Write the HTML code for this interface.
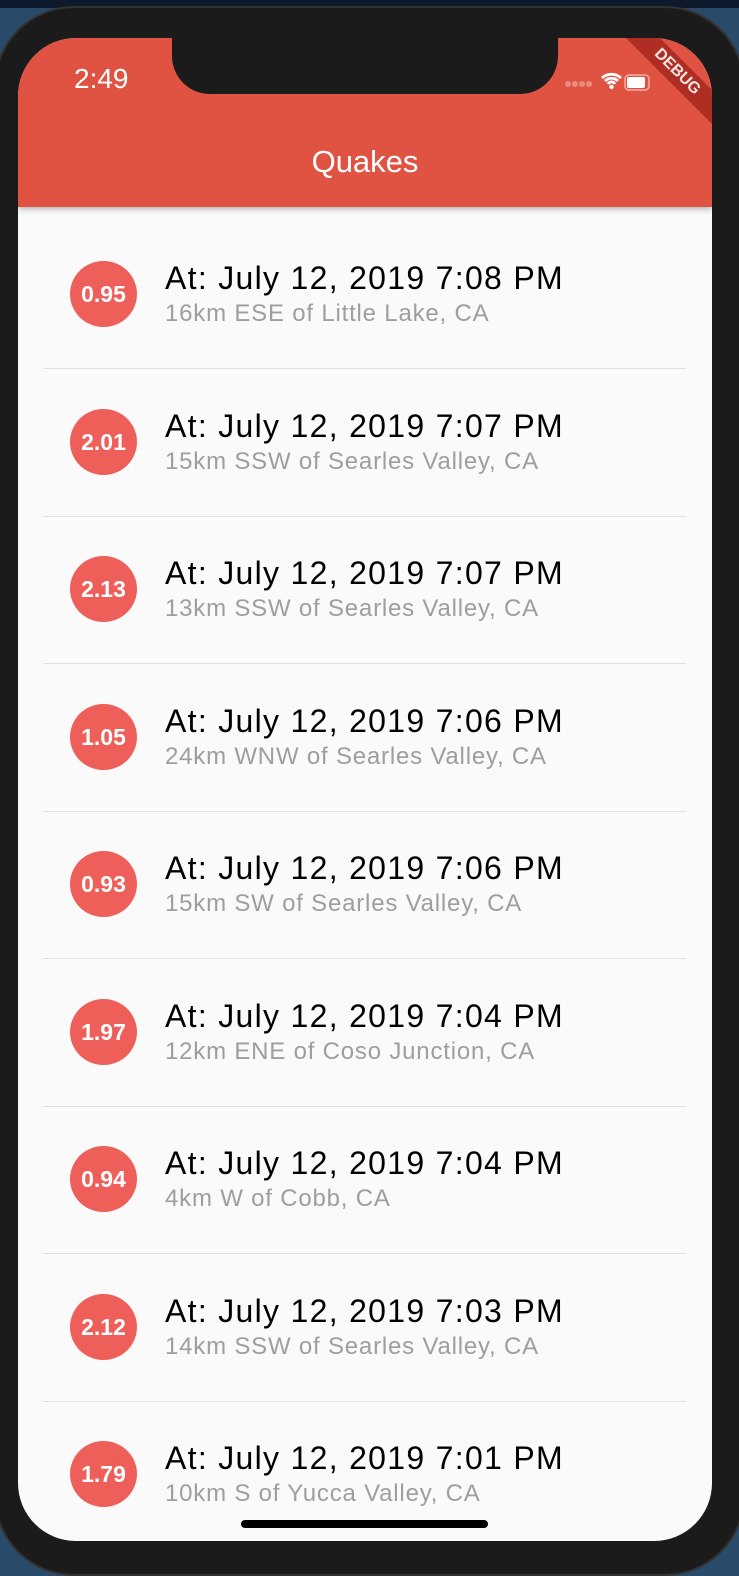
<!DOCTYPE html>
<html><head><meta charset="utf-8"><style>
*{margin:0;padding:0;box-sizing:border-box}
body{width:739px;height:1564px;overflow:hidden;background:#2a4a6a;font-family:"Liberation Sans",sans-serif;position:relative}
.topbar{position:absolute;left:0;top:0;width:739px;height:8px;background:#0c1a2c}
.phone{position:absolute;left:-6px;top:6px;width:751px;height:1570px;background:#1b1b1b;border-radius:80px;border:2px solid #333}
.screen{position:absolute;left:18px;top:38px;width:694px;height:1503px;background:#fafafa;border-radius:58px;overflow:hidden}
.appbar{position:absolute;left:0;top:0;width:694px;height:169px;background:#e05343;box-shadow:0 2px 6px rgba(0,0,0,.3)}
.notch{position:absolute;left:154px;top:0;width:386px;height:56px;background:#1b1b1b;border-radius:0 0 38px 38px}
.time{position:absolute;left:56px;top:25px;color:#fff;font-size:28px}
.title{position:absolute;left:0;width:694px;top:106px;text-align:center;color:#fff;font-size:31px}
.debug{position:absolute;right:-40px;top:22px;width:150px;height:24px;background:#a5291f;transform:rotate(45deg);color:#fff;font-size:16px;font-weight:bold;text-align:center;line-height:24px;opacity:.85}
.circ{position:absolute;left:52px;width:67px;height:66px;border-radius:50%;background:#ef5f5a;color:#fff;font-weight:bold;font-size:23px;text-align:center;line-height:66px}
.t{position:absolute;left:147px;font-size:32px;letter-spacing:1.3px;color:#000;white-space:nowrap}
.s{position:absolute;left:147px;font-size:24px;letter-spacing:0.8px;color:#9e9e9e;white-space:nowrap}
.div{position:absolute;left:25px;width:643px;height:1px;background:#e0e0e0}
.home{position:absolute;left:223px;top:1482px;width:247px;height:8px;border-radius:4px;background:#000}
</style></head><body>
<div class="topbar"></div>
<div class="phone"></div>
<div class="screen">
<div class="appbar">
<div class="time">2:49</div>
<div class="title">Quakes</div>
<svg style="position:absolute;left:546px;top:30px" width="90" height="26">
<g fill="#e88a80"><circle cx="4" cy="16" r="3"/><circle cx="11" cy="16" r="3"/><circle cx="18" cy="16" r="3"/><circle cx="25" cy="16" r="3"/></g>
<path d="M38 10a14 14 0 0 1 19 0M41 13a9 9 0 0 1 13 0M44 16a4 4 0 0 1 7 0" stroke="#fff" stroke-width="2.8" fill="none"/><circle cx="47.5" cy="19" r="2.2" fill="#fff"/>
<rect x="61" y="7" width="24" height="15" rx="4" fill="none" stroke="#f3b0a8" stroke-width="1.5"/>
<rect x="63" y="9" width="18" height="11" rx="2" fill="#fff"/>
</svg>
<div class="debug">DEBUG</div>
</div>
<div class="notch"></div>
</div>
<div class="screen" style="background:transparent;overflow:visible" id="list"></div>
<script>
var d=[["0.95","7:08","16km ESE of Little Lake, CA"],["2.01","7:07","15km SSW of Searles Valley, CA"],["2.13","7:07","13km SSW of Searles Valley, CA"],["1.05","7:06","24km WNW of Searles Valley, CA"],["0.93","7:06","15km SW of Searles Valley, CA"],["1.97","7:04","12km ENE of Coso Junction, CA"],["0.94","7:04","4km W of Cobb, CA"],["2.12","7:03","14km SSW of Searles Valley, CA"],["1.79","7:01","10km S of Yucca Valley, CA"]];
var h="";
d.forEach(function(r,i){var c=256+i*147.5;
h+='<div class="circ" style="top:'+(c-33)+'px">'+r[0]+'</div>';
h+='<div class="t" style="top:'+(c-34)+'px">At: July 12, 2019 '+r[1]+' PM</div>';
h+='<div class="s" style="top:'+(c+6)+'px">'+r[2]+'</div>';
if(i<8)h+='<div class="div" style="top:'+(c+74)+'px"></div>';});
h+='<div class="home"></div>';
document.getElementById("list").innerHTML=h;
</script>
</body></html>
